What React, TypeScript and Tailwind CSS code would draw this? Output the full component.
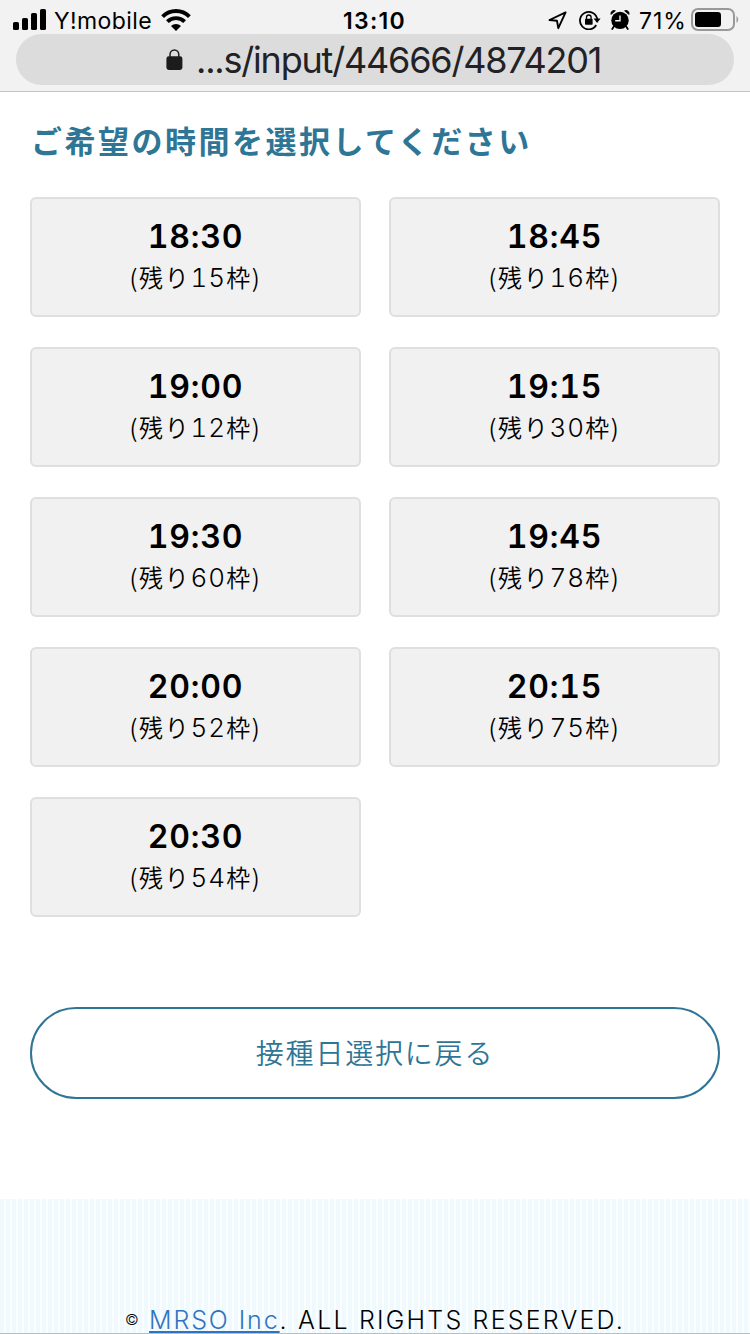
import React from "react";

const slots = [
  { time: "18:30", left: 15 },
  { time: "18:45", left: 16 },
  { time: "19:00", left: 12 },
  { time: "19:15", left: 30 },
  { time: "19:30", left: 60 },
  { time: "19:45", left: 78 },
  { time: "20:00", left: 52 },
  { time: "20:15", left: 75 },
  { time: "20:30", left: 54 },
];

function SignalIcon() {
  return (
    <svg className="block" width="34" height="22" viewBox="0 0 34 22">
      <rect x="0" y="13" width="6" height="8" rx="1.6" />
      <rect x="9" y="9" width="6" height="12" rx="1.6" />
      <rect x="18" y="4" width="6" height="17" rx="1.6" />
      <rect x="27" y="0" width="6" height="21" rx="1.6" />
    </svg>
  );
}

function WifiIcon() {
  return (
    <svg className="block" width="30" height="22" viewBox="0 0 30 22">
      <g fill="none" stroke="#000" strokeWidth="3.9">
        <path d="M1.6 7.6 A19 19 0 0 1 28.4 7.6" />
        <path d="M6.4 12.6 A12.3 12.3 0 0 1 23.6 12.6" />
      </g>
      <path d="M10 17 A7.2 7.2 0 0 1 20 17 L15 22 Z" />
    </svg>
  );
}

function LocationIcon() {
  return (
    <svg className="block" width="20" height="20" viewBox="0 0 20 20">
      <path d="M17.6 2.4 L1.5 10 L9 10.8 L10.3 18.2 Z" fill="none" stroke="#000" strokeWidth="1.9" strokeLinejoin="round" />
    </svg>
  );
}

function RotationLockIcon() {
  return (
    <svg className="block" width="22" height="20" viewBox="0 0 22 20">
      <path d="M17.2 15 A8.7 8.7 0 1 1 18.3 9.5" fill="none" stroke="#000" strokeWidth="1.8" />
      <path d="M14.6 8.6 H21.6 L18.1 12.9 Z" />
      <rect x="6" y="8.8" width="7.6" height="6" rx="0.8" />
      <path d="M7.5 9 V7.3 A2.3 2.3 0 0 1 12.1 7.3 V9" fill="none" stroke="#000" strokeWidth="1.3" />
    </svg>
  );
}

function AlarmIcon() {
  return (
    <svg className="block" width="20" height="20" viewBox="0 0 20 20">
      <circle cx="10" cy="10.4" r="8.7" />
      <path d="M0.9 5 A3.4 3.4 0 0 1 6 0.8 Z M19.1 5 A3.4 3.4 0 0 0 14 0.8 Z" />
      <path d="M4.2 16 L2.2 19 M15.8 16 L17.8 19" stroke="#000" strokeWidth="1.8" strokeLinecap="round" />
      <path d="M10 5.4 V10.7 H5.2" fill="none" stroke="#f2f2f2" strokeWidth="1.4" />
    </svg>
  );
}

function BatteryIcon() {
  return (
    <svg className="block" width="48" height="24" viewBox="0 0 48 24">
      <rect x="1" y="1" width="42" height="21" rx="6" fill="none" stroke="#999" strokeWidth="2" />
      <rect x="4" y="4" width="26" height="15" rx="3.2" />
      <path d="M45.5 8 A4.4 4.4 0 0 1 45.5 15 Z" fill="#999" />
    </svg>
  );
}

function LockIcon() {
  return (
    <svg className="block" width="17" height="22" viewBox="0 0 17 22">
      <rect x="0.4" y="7.3" width="16" height="13.7" rx="2.4" fill="#1c1c1e" />
      <path d="M4 9 V5.5 A4.4 4.6 0 0 1 12.8 5.5 V9" fill="none" stroke="#1c1c1e" strokeWidth="1.5" />
    </svg>
  );
}

function BrowserHeader() {
  return (
    <header className="h-[92px] border-b border-[#c4c4c6] bg-[#f2f2f2]">
      <div className="grid h-[34px] grid-cols-[343px_1fr_202px] pt-[7px] font-['Inter',sans-serif] text-black">
        <div className="flex h-[26px] items-center pl-[13px]">
          <SignalIcon />
          <span className="ml-[7px] w-[100px] pt-[2px] text-[23px] leading-[26px] tracking-[0.4px]">Y!mobile</span>
          <div className="ml-[7px]"><WifiIcon /></div>
        </div>
        <div className="pt-px text-[23px] leading-[26px] font-semibold tracking-[1.3px]">13:10</div>
        <div className="flex h-[26px] items-center">
          <LocationIcon />
          <div className="ml-[11px]"><RotationLockIcon /></div>
          <div className="ml-[9px]"><AlarmIcon /></div>
          <span className="ml-[9px] w-[48px] pt-[2px] text-[23px] leading-[26px] tracking-[0.9px]">71%</span>
          <div className="ml-[4px]"><BatteryIcon /></div>
        </div>
      </div>
      <div className="mx-[16px] flex h-[51px] items-center rounded-full bg-[#dcdcdc] pl-[150px]">
        <LockIcon />
        <span className="ml-[13px] whitespace-nowrap font-['Inter',sans-serif] text-[36px] leading-[50px] tracking-[-1.2px] text-[#222226]">
          ...s/input/44666/4874201
        </span>
      </div>
    </header>
  );
}

function SlotCard({ time, left }: { time: string; left: number }) {
  return (
    <button className="flex h-[120px] flex-col items-center rounded-[6px] border-2 border-[#dfdfdf] bg-[#f1f1f1] pt-[16px] text-black">
      <span className="font-['Inter',sans-serif] text-[32px] leading-[44px] font-semibold tracking-[0.8px] tabular-nums [font-feature-settings:'calt'_0]">
        {time}
      </span>
      <span className="-mt-[2px] text-[24px] leading-[40px] font-[350] tracking-[1.7px]">
        (残り<span className="font-['Inter',sans-serif] text-[26px] font-light tracking-[1px] tabular-nums">{left}</span>枠)
      </span>
    </button>
  );
}

export default function App() {
  return (
    <div className="flex h-[1334px] w-[750px] flex-col overflow-hidden bg-white font-['Noto_Sans_CJK_JP',sans-serif]">
      <BrowserHeader />
      <main className="px-[30px]">
        <h1 className="mt-[23px] h-[50px] whitespace-nowrap pl-px text-[31px] leading-[50px] font-bold tracking-[2.5px] text-[#2f7595]">
          ご希望の時間を選択してください
        </h1>
        <div className="mt-[32px] grid grid-cols-2 gap-x-[28px] gap-y-[30px]">
          {slots.map((slot) => (
            <SlotCard key={slot.time} {...slot} />
          ))}
        </div>
        <button className="mt-[90px] h-[92px] w-full rounded-full border-2 border-[#2f7595] pb-[3px] text-[28px] leading-[40px] font-[350] tracking-[1.8px] text-[#2f7595]">
          接種日選択に戻る
        </button>
      </main>
      <footer className="mt-[100px] flex h-[135px] items-end border-b border-[#b9c0c4] bg-[repeating-linear-gradient(90deg,#f0f9fe_0px,#f0f9fe_4px,#fbfeff_4px,#fbfeff_6px)] pl-[125px]">
        <p className="flex h-[26px] items-center whitespace-nowrap font-['Inter',sans-serif] text-[25px] leading-[26px] font-light tracking-[1.9px] text-black">
          <span className="w-[24px] text-[15px]">©</span>
          <a className="text-[#2f74bf] underline decoration-2 underline-offset-[2px]">MRSO Inc</a>
          <span className="whitespace-pre tracking-[2.2px]">. ALL RIGHTS RESERVED.</span>
        </p>
      </footer>
    </div>
  );
}
